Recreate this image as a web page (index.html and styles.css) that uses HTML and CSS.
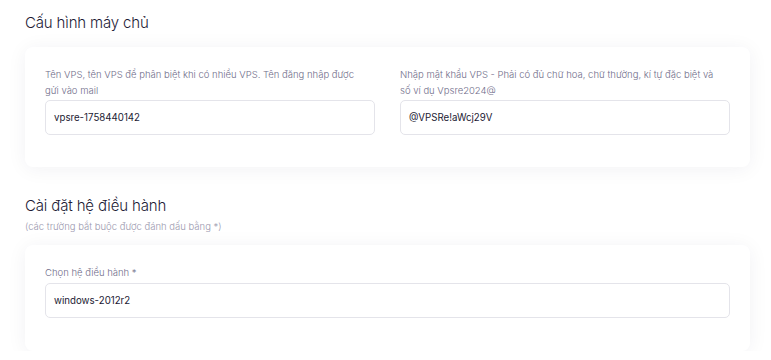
FILE: index.html
```html
<!DOCTYPE html>
<html lang="vi">
<head>
<meta charset="utf-8">
<link rel="stylesheet" href="styles.css">
</head>
<body>
<main class="page">
  <section class="section">
    <h2 class="section-title">Cấu hình máy chủ</h2>
    <div class="card">
      <div class="grid two">
        <div class="field">
          <label class="field-label">Tên VPS, tên VPS để phân biệt khi có nhiều VPS. Tên đăng nhập được gửi vào mail</label>
          <div class="input">vpsre-1758440142</div>
        </div>
        <div class="field">
          <label class="field-label">Nhập mật khẩu VPS - Phải có đủ chữ hoa, chữ thường, kí tự đặc biệt và số ví dụ Vpsre2024@</label>
          <div class="input">@VPSRe!aWcj29V</div>
        </div>
      </div>
    </div>
  </section>
  <section class="section second">
    <h2 class="section-title">Cài đặt hệ điều hành</h2>
    <p class="section-note">(các trường bắt buộc được đánh dấu bằng *)</p>
    <div class="card card-os">
      <div class="field">
        <label class="field-label single">Chọn hệ điều hành *</label>
        <div class="input">windows-2012r2</div>
      </div>
    </div>
  </section>
</main>
</body>
</html>
```

FILE: styles.css
```css
* { box-sizing: border-box; }
html, body { margin: 0; padding: 0; background: #ffffff; }
body {
  font-family: Inter, "Noto Sans", sans-serif;
  color: #1e1e3a;
}
.page {
  padding: 12px 21px 0 25px;
}
.section-title {
  margin: 0;
  font-size: 15px;
  line-height: 21px;
  font-weight: 300;
  color: #1d1b36;
  letter-spacing: -0.15px;
}
.section .card { margin-top: 14px; }
.second { margin-top: 28px; }
.section-note {
  margin: 4px 0 0;
  font-size: 9.5px;
  line-height: 14px;
  font-weight: 300;
  color: #9a98ae;
}
.second .card { margin-top: 11px; }
.card {
  background: #fff;
  border-radius: 8px;
  box-shadow: 0 2px 20px rgba(40, 40, 70, 0.06);
  padding: 20px 20px 32px;
}
.card-os { padding-bottom: 33px; }
.grid.two {
  display: grid;
  grid-template-columns: 1fr 1fr;
  column-gap: 25px;
}
.field { display: flex; flex-direction: column; }
.field-label {
  font-size: 9.5px;
  line-height: 16px;
  font-weight: 300;
  color: #6f6d8a;
  margin-bottom: 1px;
  padding-right: 16px;
}
.field-label.single { margin-bottom: 2px; }
.input {
  height: 35px;
  border: 1px solid #e4e4ea;
  border-radius: 5px;
  padding: 0 8px;
  display: flex;
  align-items: center;
  font-size: 9.7px;
  color: #1c1a33;
}
```
